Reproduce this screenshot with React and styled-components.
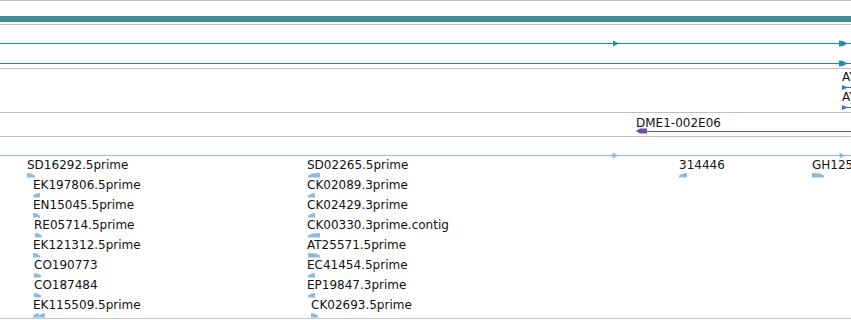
import React from 'react';
import styled, { createGlobalStyle } from 'styled-components';

const Global = createGlobalStyle`
  html, body { margin: 0; padding: 0; background: #ffffff; }
  body { font-family: "DejaVu Sans", "Noto Sans", sans-serif; overflow: hidden; }
`;

const GRAY = '#c0c0c0';
const TEAL_BAR = '#3f8e92';
const TEAL = '#1f8ea8';
const LIGHT = '#8dbbe0';
const BLUE = '#3a6dd6';
const PURPLE = '#6a4fa4';

const Panel = styled.div`
  width: 851px;
  height: 320px;
  overflow: hidden;
  display: flex;
  flex-direction: column;
  border-top: 1px solid ${GRAY};
  box-sizing: border-box;
`;

const Track = styled.div`
  position: relative;
  flex: none;
  height: ${(p) => p.$h}px;
  border-bottom: 1px solid ${GRAY};
  overflow: hidden;
`;

const Bar = styled.div`
  position: absolute;
  left: 0;
  right: 0;
  top: ${(p) => p.$top}px;
  height: 6px;
  background: ${TEAL_BAR};
`;

const LineFeature = styled.svg`
  position: absolute;
  left: 0;
  top: ${(p) => p.$top}px;
  display: block;
`;

const Column = styled.div`
  position: absolute;
  left: ${(p) => p.$x}px;
  top: ${(p) => p.$top}px;
  display: flex;
  flex-direction: column;
`;

const Row = styled.div`
  height: 20px;
  display: flex;
  flex-direction: column;
  margin-left: ${(p) => p.$indent || 0}px;
`;

const Label = styled.div`
  height: ${(p) => p.$h || 14}px;
  line-height: 14px;
  font-size: 12px;
  color: #111;
  white-space: nowrap;
`;

const Glyph = styled.svg`
  display: block;
  margin-top: ${(p) => p.$mt ?? 1}px;
  flex: none;
`;

const SpanFeature = styled.div`
  position: absolute;
  left: ${(p) => p.$x}px;
  right: 0;
  top: ${(p) => p.$top}px;
  display: flex;
  flex-direction: column;
`;

const HeadLine = styled.div`
  display: flex;
  align-items: center;
  height: 6px;
`;

const Shaft = styled.div`
  flex: 1;
  height: 1px;
  background: ${(p) => p.$color};
`;

const GlyphWrap = styled.div`
  margin-left: ${(p) => p.$gx || 0}px;
`;

function pennant(w, h, dir) {
  const tip = Math.min(4, w * 0.5);
  return dir === 'r'
    ? `0,0 ${w - tip},0.6 ${w},${h * 0.55} ${w},${h} 0,${h}`
    : `${w},0 ${tip},0.6 0,${h * 0.55} 0,${h} ${w},${h}`;
}

function Arrow({ w, dir, double, color = LIGHT }) {
  const h = 4.5;
  if (double) {
    return (
      <Glyph width={w} height={5} viewBox={`0 0 ${w} 5`}>
        <polygon points={pennant(6, h, dir)} fill={color} />
        <polygon points={pennant(6, h, dir)} fill={color} transform="translate(6,0)" />
      </Glyph>
    );
  }
  return (
    <Glyph width={w} height={5} viewBox={`0 0 ${w} 5`}>
      <polygon points={pennant(w, h, dir)} fill={color} />
    </Glyph>
  );
}

const col1 = [
  { name: 'SD16292.5prime', x: 27, w: 8, dir: 'r' },
  { name: 'EK197806.5prime', x: 33, w: 7, dir: 'l' },
  { name: 'EN15045.5prime', x: 33, w: 7, dir: 'r' },
  { name: 'RE05714.5prime', x: 34, w: 7, dir: 'r', gx: 1 },
  { name: 'EK121312.5prime', x: 33, w: 7, dir: 'r' },
  { name: 'CO190773', x: 34, w: 7, dir: 'r' },
  { name: 'CO187484', x: 34, w: 7, dir: 'r' },
  { name: 'EK115509.5prime', x: 33, w: 12, dir: 'l', double: true },
];

const col2 = [
  { name: 'SD02265.5prime', x: 307, w: 12, dir: 'l', gx: 1 },
  { name: 'CK02089.3prime', x: 307, w: 7, dir: 'l', gx: 1 },
  { name: 'CK02429.3prime', x: 307, w: 7, dir: 'l', gx: 1 },
  { name: 'CK00330.3prime.contig', x: 307, w: 12, dir: 'l', gx: 1 },
  { name: 'AT25571.5prime', x: 307, w: 12, dir: 'r', gx: 1 },
  { name: 'EC41454.5prime', x: 307, w: 7, dir: 'l', gx: 1 },
  { name: 'EP19847.3prime', x: 307, w: 7, dir: 'l', gx: 1 },
  { name: 'CK02693.5prime', x: 311, w: 7, dir: 'r' },
];

function EstColumn({ x, items }) {
  return (
    <Column $x={x} $top={21}>
      {items.map((it) => (
        <Row key={it.name} $indent={it.x - x}>
          <Label>{it.name}</Label>
          <GlyphWrap $gx={it.gx}>
            <Arrow w={it.w} dir={it.dir} double={it.double} />
          </GlyphWrap>
        </Row>
      ))}
    </Column>
  );
}

const BlueMark = () => (
  <Glyph width={9} height={5} viewBox="0 0 9 5" $mt={1}>
    <polygon points="0,0 6,2.5 0,5" fill={BLUE} />
    <rect x="0" y="2" width="9" height="1" fill={BLUE} />
  </Glyph>
);

export default function App() {
  return (
    <>
      <Global />
      <Panel>
        <Track $h={23}>
          <Bar $top={15} />
        </Track>

        <Track $h={43}>
          <LineFeature $top={15} width="851" height="7" viewBox="0 0 851 7">
            <rect x="0" y="3" width="851" height="1" fill={TEAL} />
            <polygon points="613,0.5 619,3.5 613,6.5" fill={TEAL} />
            <polygon points="839,0.5 843,1 847.5,3.5 843,6 839,6.5" fill={TEAL} />
          </LineFeature>
          <LineFeature $top={35} width="851" height="7" viewBox="0 0 851 7">
            <rect x="0" y="3" width="851" height="1" fill={TEAL} />
            <polygon points="839,0.5 843,1 847.5,3.5 843,6 839,6.5" fill={TEAL} />
          </LineFeature>
        </Track>

        <Track $h={43}>
          <Column $x={842} $top={1}>
            <Row>
              <Label>AY118527</Label>
              <BlueMark />
            </Row>
            <Row>
              <Label>AY118528</Label>
              <BlueMark />
            </Row>
          </Column>
        </Track>

        <Track $h={23}>
          <SpanFeature $x={636} $top={3}>
            <Label $h={12}>DME1-002E06</Label>
            <HeadLine>
              <svg width="11" height="6" viewBox="0 0 11 6" style={{ display: 'block', flex: 'none' }}>
                <polygon points="0,3 4,0.5 11,0.5 11,5.5 4,5.5" fill={PURPLE} />
              </svg>
              <Shaft $color={PURPLE} />
            </HeadLine>
          </SpanFeature>
        </Track>

        <Track $h={181}>
          <LineFeature $top={15} width="851" height="7" viewBox="0 0 851 7">
            <rect x="0" y="3" width="851" height="1" fill={LIGHT} />
            <polygon points="612.5,0.5 618,3.5 612.5,6.5" fill={LIGHT} />
            <polygon points="839.5,0.5 845,3.5 839.5,6.5" fill={LIGHT} />
          </LineFeature>
          <EstColumn x={27} items={col1} />
          <EstColumn x={307} items={col2} />
          <EstColumn x={679} items={[{ name: '314446', x: 679, w: 8, dir: 'l' }]} />
          <EstColumn x={812} items={[{ name: 'GH12541.5prime', x: 812, w: 12, dir: 'r' }]} />
        </Track>
      </Panel>
    </>
  );
}
